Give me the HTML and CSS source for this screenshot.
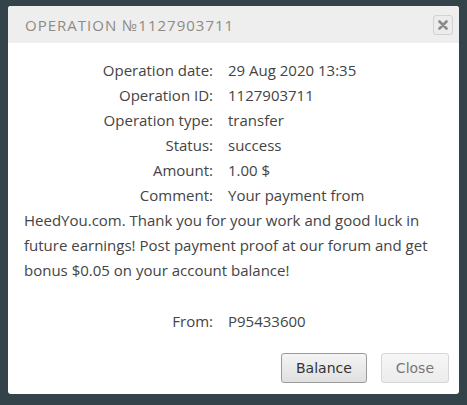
FILE: index.html
```html
<!DOCTYPE html>
<html lang="en">
<head>
  <meta charset="UTF-8">
  <title>Operation</title>
  <link rel="stylesheet" href="styles.css">
</head>
<body>

  <div class="dialog">
    <div class="dialog-header">
      <span class="dialog-title">Operation №1127903711</span>
      <button class="dialog-x" title="close">
        <svg width="10" height="10" viewBox="0 0 10 10"><path d="M1.5 1.5 L8.5 8.5 M8.5 1.5 L1.5 8.5" stroke="#8a8a8a" stroke-width="2.6" stroke-linecap="round"/></svg>
      </button>
    </div>

    <div class="dialog-body">
      <div class="row"><span class="lbl">Operation date:</span>29 Aug 2020 13:35</div>
      <div class="row"><span class="lbl">Operation ID:</span>1127903711</div>
      <div class="row"><span class="lbl">Operation type:</span>transfer</div>
      <div class="row"><span class="lbl">Status:</span>success</div>
      <div class="row"><span class="lbl">Amount:</span>1.00 $</div>
      <div class="row"><span class="lbl">Comment:</span>Your payment from HeedYou.com. Thank you for your work and good luck in future earnings! Post payment proof at our forum and get bonus $0.05 on your account balance!</div>
      <div class="row spaced"><span class="lbl">From:</span>P95433600</div>
    </div>

    <div class="dialog-buttons">
      <button class="btn">Balance</button>
      <button class="btn btn-light">Close</button>
    </div>
  </div>

</body>
</html>
```

FILE: styles.css
```css
body {
  margin: 0;
  background-color: #34434a;
  font-family: "Open Sans", Arial, sans-serif;
}

.dialog {
  margin: 6px 8px;
  width: 451px;
  height: 388px;
  background-color: #fff;
  border-radius: 3px;
  display: flex;
  flex-direction: column;
  overflow: hidden;
}

.dialog-header {
  height: 37px;
  background-color: #eeeeee;
  display: flex;
  align-items: center;
  justify-content: space-between;
  padding: 0 6px 0 17px;
}

.dialog-title {
  text-transform: uppercase;
  color: #8f8a84;
  font-size: 15px;
  letter-spacing: 1px;
}

.dialog-x {
  width: 20px;
  height: 20px;
  padding: 0;
  border: 1px solid #d2d2d2;
  border-radius: 3px;
  background-color: #ececec;
  display: flex;
  align-items: center;
  justify-content: center;
}

.dialog-body {
  flex: 1;
  padding: 15px 20px 0 16px;
  color: #444;
  font-size: 15px;
  line-height: 25px;
}

.lbl {
  display: inline-block;
  width: 189px;
  text-align: right;
  margin-right: 15px;
}

.spaced {
  margin-top: 26px;
}

.dialog-buttons {
  display: flex;
  justify-content: flex-end;
  gap: 14px;
  padding: 0 10px 11px 0;
}

.btn {
  height: 30px;
  padding: 0 14px;
  font-family: "DejaVu Sans", Verdana, sans-serif;
  font-size: 14px;
  color: #333;
  border: 1px solid #9a9a9a;
  border-radius: 3px;
  background: linear-gradient(#f4f4f4, #e0e0e0);
}

.btn-light {
  color: #777;
  border-color: #d6d6d6;
  background: linear-gradient(#f6f6f6, #ececec);
}
```
